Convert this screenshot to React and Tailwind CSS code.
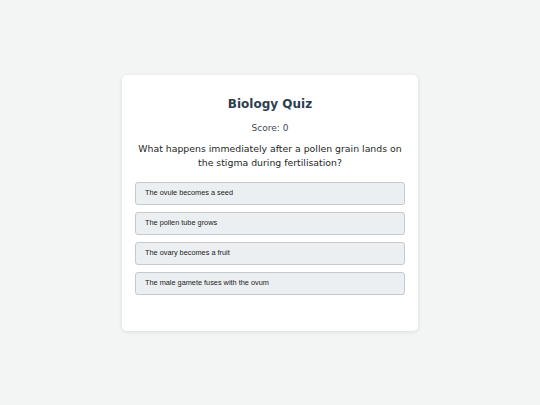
const options = [
  "The ovule becomes a seed",
  "The pollen tube grows",
  "The ovary becomes a fruit",
  "The male gamete fuses with the ovum",
];

export default function App() {
  return (
    <div className="flex min-h-[405px] w-full items-center justify-center bg-[#f3f4f4] font-['DejaVu_Sans',sans-serif]">
      <div className="w-[296px] rounded-[5px] bg-white px-[13px] pt-[21px] pb-[36px] shadow-[0_1px_4px_rgba(0,0,0,0.1)]">
        <h2 className="text-center text-[12px] leading-4 font-bold text-[#2c3e50]">
          Biology Quiz
        </h2>
        <p className="mt-[10px] text-center text-[9px] leading-3 text-[#3d4a56]">
          Score: 0
        </p>
        <p className="mt-[8px] text-center text-[9.33px] leading-[14px] text-[#262626]">
          What happens immediately after a pollen grain lands on the stigma during fertilisation?
        </p>
        <div className="mt-[12px] flex flex-col gap-[7px]">
          {options.map((opt) => (
            <button
              key={opt}
              className="h-[23px] w-full rounded-[3px] border border-[#c6c9cb] bg-[#eceff1] pl-[9px] text-left font-['Liberation_Sans',Arial,sans-serif] text-[7.33px] text-[#1a1a1a]"
            >
              {opt}
            </button>
          ))}
        </div>
      </div>
    </div>
  );
}
